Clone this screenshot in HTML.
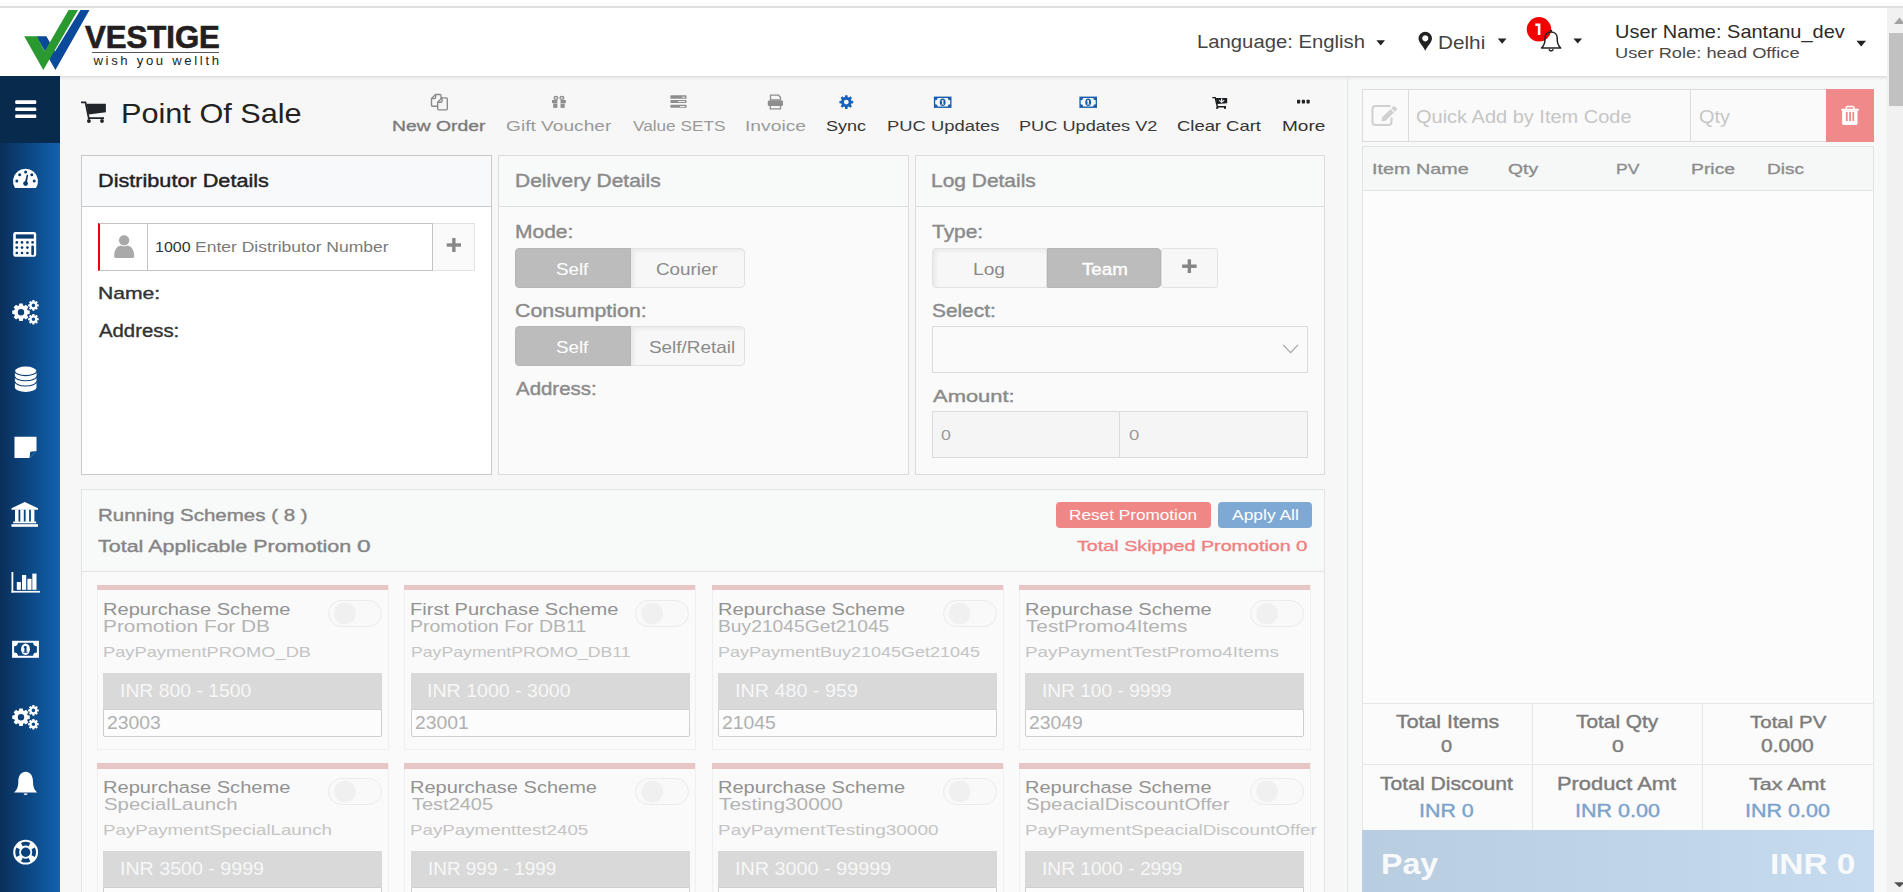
<!DOCTYPE html>
<html><head><meta charset="utf-8"><style>
html,body{margin:0;padding:0;width:1903px;height:892px;overflow:hidden;background:#fff}
body{position:relative;font-family:"Liberation Sans",sans-serif}
.t{position:absolute;white-space:nowrap;line-height:1;transform-origin:0 0}
.b{position:absolute;box-sizing:border-box}
svg{position:absolute;left:0;top:0}
</style></head><body>
<div class="b" style="left:0px;top:0px;width:1903px;height:892px;background:#fff"></div>
<div class="b" style="left:0px;top:6px;width:1903px;height:2px;background:#dfe1df"></div>
<div class="b" style="left:0px;top:8px;width:1887px;height:68px;background:#fff"></div>
<div class="b" style="left:60px;top:76px;width:1287px;height:816px;background:#f7f7f7"></div>
<div class="b" style="left:1347px;top:76px;width:540px;height:816px;background:#f7f9f9;border-left:1px solid #e3e4ea"></div>
<div class="b" style="left:60px;top:76px;width:1827px;height:4px;background:linear-gradient(#d9d9d9,#e8e8e8 35%,rgba(247,247,247,0))"></div>
<div class="b" style="left:0px;top:76px;width:60px;height:816px;background:linear-gradient(90deg,#0a2f5a 0%,#0c4580 45%,#1262b0 100%)"></div>
<div class="b" style="left:0px;top:76px;width:60px;height:67px;background:#072a4d"></div>
<div class="b" style="left:1887px;top:8px;width:16px;height:884px;background:#f1f1f1"></div>
<div class="b" style="left:1889px;top:33px;width:14px;height:73px;background:#c1c1c1"></div>
<div class="t" style="left:85.34px;top:23px;font-size:30.91px;font-weight:700;color:#231f20;transform:scaleX(1.0064);-webkit-text-stroke:0.7px #231f20">VESTIGE</div>
<div class="b" style="left:92px;top:52px;width:127px;height:1px;background:#5a5656"></div>
<div class="t" style="left:93.40px;top:54px;font-size:13.15px;font-weight:400;color:#231f20;letter-spacing:2.665px;">wish you wellth</div>
<div class="t" style="left:1196.98px;top:33px;font-size:18.18px;font-weight:400;color:#444;transform:scaleX(1.1162);">Language: English</div>
<div class="t" style="left:1438.44px;top:35px;font-size:17.90px;font-weight:400;color:#444;transform:scaleX(1.1591);">Delhi</div>
<div class="t" style="left:1615.10px;top:24px;font-size:17.76px;font-weight:400;color:#2b2b2b;transform:scaleX(1.1250);">User Name: Santanu_dev</div>
<div class="t" style="left:1615.23px;top:46px;font-size:14.55px;font-weight:400;color:#4a4a4a;transform:scaleX(1.2565);">User Role: head Office</div>
<div class="t" style="left:120.75px;top:101px;font-size:26.99px;font-weight:400;color:#222;transform:scaleX(1.1361);">Point Of Sale</div>
<div class="t" style="left:392.25px;top:119px;font-size:14.97px;font-weight:400;-webkit-text-stroke:0.329px #7a7a7a;color:#7a7a7a;transform:scaleX(1.2913);">New Order</div>
<div class="t" style="left:505.74px;top:119px;font-size:14.97px;font-weight:400;color:#9a9a9a;transform:scaleX(1.2787);">Gift Voucher</div>
<div class="t" style="left:632.81px;top:118px;font-size:15.10px;font-weight:400;color:#9a9a9a;transform:scaleX(1.1387);">Value SETS</div>
<div class="t" style="left:745.07px;top:118px;font-size:15.10px;font-weight:400;color:#9a9a9a;transform:scaleX(1.2760);">Invoice</div>
<div class="t" style="left:826.09px;top:118px;font-size:15.10px;font-weight:400;color:#333;transform:scaleX(1.1920);">Sync</div>
<div class="t" style="left:886.63px;top:118px;font-size:15.24px;font-weight:400;color:#3a3a3a;transform:scaleX(1.2070);">PUC Updates</div>
<div class="t" style="left:1019.05px;top:118px;font-size:15.24px;font-weight:400;color:#3a3a3a;transform:scaleX(1.1927);">PUC Updates V2</div>
<div class="t" style="left:1177.48px;top:118px;font-size:15.52px;font-weight:400;color:#333;transform:scaleX(1.1867);">Clear Cart</div>
<div class="t" style="left:1282.18px;top:118px;font-size:15.52px;font-weight:400;color:#333;transform:scaleX(1.2254);">More</div>
<div class="b" style="left:81px;top:155px;width:411px;height:320px;background:#fff;border:1px solid #c9c9c9"></div>
<div class="b" style="left:81px;top:155px;width:411px;height:52px;background:#f8f9fb;border:1px solid #c9c9c9"></div>
<div class="b" style="left:498px;top:155px;width:411px;height:320px;background:#fafafa;border:1px solid #dcdcdc"></div>
<div class="b" style="left:498px;top:155px;width:411px;height:52px;background:#f8f9f9;border:1px solid #dcdcdc"></div>
<div class="b" style="left:915px;top:155px;width:410px;height:320px;background:#fafafa;border:1px solid #dcdcdc"></div>
<div class="b" style="left:915px;top:155px;width:410px;height:52px;background:#f8f9f9;border:1px solid #dcdcdc"></div>
<div class="t" style="left:97.77px;top:172px;font-size:18.04px;font-weight:400;-webkit-text-stroke:0.397px #222;color:#222;transform:scaleX(1.2012);">Distributor Details</div>
<div class="t" style="left:514.92px;top:173px;font-size:17.62px;font-weight:400;-webkit-text-stroke:0.388px #8a8a8a;color:#8a8a8a;transform:scaleX(1.1906);">Delivery Details</div>
<div class="t" style="left:931.32px;top:173px;font-size:17.62px;font-weight:400;-webkit-text-stroke:0.388px #8a8a8a;color:#8a8a8a;transform:scaleX(1.1895);">Log Details</div>
<div class="b" style="left:98px;top:223px;width:50px;height:48px;background:#fff;border:1px solid #c4c4c4;border-left:2px solid #e6000f"></div>
<div class="b" style="left:147px;top:223px;width:286px;height:48px;background:#fff;border:1px solid #c4c4c4"></div>
<div class="b" style="left:433px;top:223px;width:42px;height:48px;background:#fafafa;border:1px solid #e2e2e2;border-left:none"></div>
<div class="t" style="left:155.30px;top:239px;font-size:15.24px;font-weight:400;color:#333;transform:scaleX(1.0514);">1000</div>
<div class="t" style="left:194.50px;top:239px;font-size:15.24px;font-weight:400;color:#7a7a7a;transform:scaleX(1.1491);">Enter Distributor Number</div>
<div class="t" style="left:97.71px;top:285px;font-size:17.20px;font-weight:400;-webkit-text-stroke:0.378px #333;color:#333;transform:scaleX(1.2296);">Name:</div>
<div class="t" style="left:98.90px;top:323px;font-size:17.48px;font-weight:400;-webkit-text-stroke:0.385px #333;color:#333;transform:scaleX(1.1633);">Address:</div>
<div class="t" style="left:514.92px;top:224px;font-size:17.48px;font-weight:400;-webkit-text-stroke:0.385px #8a8a8a;color:#8a8a8a;transform:scaleX(1.2011);">Mode:</div>
<div class="b" style="left:630px;top:248px;width:115px;height:40px;background:#f7f7f7;border:1px solid #e2e2e2;border-radius:0 4px 4px 0;box-shadow:inset 3px 2px 4px rgba(0,0,0,0.06)"></div>
<div class="b" style="left:515px;top:248px;width:116px;height:40px;background:#bcbcbc;border:1px solid #b5b5b5;border-radius:4px 0 0 4px"></div>
<div class="t" style="left:556.06px;top:261px;font-size:16.50px;font-weight:400;color:#fff;transform:scaleX(1.1361);">Self</div>
<div class="t" style="left:655.76px;top:261px;font-size:16.50px;font-weight:400;color:#8a8a8a;transform:scaleX(1.1420);">Courier</div>
<div class="t" style="left:515.13px;top:303px;font-size:17.90px;font-weight:400;-webkit-text-stroke:0.394px #8a8a8a;color:#8a8a8a;transform:scaleX(1.1932);">Consumption:</div>
<div class="b" style="left:630px;top:326px;width:115px;height:40px;background:#f7f7f7;border:1px solid #e2e2e2;border-radius:0 4px 4px 0;box-shadow:inset 3px 2px 4px rgba(0,0,0,0.06)"></div>
<div class="b" style="left:515px;top:326px;width:116px;height:40px;background:#bcbcbc;border:1px solid #b5b5b5;border-radius:4px 0 0 4px"></div>
<div class="t" style="left:556.06px;top:339px;font-size:16.50px;font-weight:400;color:#fff;transform:scaleX(1.1361);">Self</div>
<div class="t" style="left:649.35px;top:339px;font-size:16.50px;font-weight:400;color:#8a8a8a;transform:scaleX(1.1451);">Self/Retail</div>
<div class="t" style="left:515.50px;top:380px;font-size:18.18px;font-weight:400;-webkit-text-stroke:0.400px #8a8a8a;color:#8a8a8a;transform:scaleX(1.1243);">Address:</div>
<div class="t" style="left:931.78px;top:224px;font-size:17.62px;font-weight:400;-webkit-text-stroke:0.388px #8a8a8a;color:#8a8a8a;transform:scaleX(1.1884);">Type:</div>
<div class="b" style="left:932px;top:248px;width:115px;height:40px;background:#f7f7f7;border:1px solid #e2e2e2;border-radius:4px 0 0 4px;box-shadow:inset 3px 2px 4px rgba(0,0,0,0.06)"></div>
<div class="b" style="left:1047px;top:248px;width:114px;height:40px;background:#bcbcbc;border:1px solid #b5b5b5;border-radius:0 4px 4px 0"></div>
<div class="t" style="left:973.26px;top:262px;font-size:16.64px;font-weight:400;color:#8a8a8a;transform:scaleX(1.1542);">Log</div>
<div class="t" style="left:1081.63px;top:262px;font-size:16.64px;font-weight:400;-webkit-text-stroke:0.366px #fff;color:#fff;transform:scaleX(1.1253);">Team</div>
<div class="b" style="left:1161px;top:248px;width:57px;height:40px;background:#f7f7f7;border:1px solid #e2e2e2;border-radius:3px"></div>
<div class="t" style="left:931.66px;top:303px;font-size:17.48px;font-weight:400;-webkit-text-stroke:0.385px #8a8a8a;color:#8a8a8a;transform:scaleX(1.1930);">Select:</div>
<div class="b" style="left:932px;top:326px;width:376px;height:47px;background:#fafafa;border:1px solid #dcdcdc"></div>
<div class="t" style="left:932.60px;top:388px;font-size:17.06px;font-weight:400;-webkit-text-stroke:0.375px #8a8a8a;color:#8a8a8a;transform:scaleX(1.2868);">Amount:</div>
<div class="b" style="left:932px;top:411px;width:188px;height:47px;background:#f5f5f5;border:1px solid #dcdcdc"></div>
<div class="b" style="left:1119px;top:411px;width:189px;height:47px;background:#f5f5f5;border:1px solid #dcdcdc"></div>
<div class="t" style="left:940.89px;top:428px;font-size:14.27px;font-weight:400;color:#9a9a9a;transform:scaleX(1.2413);">0</div>
<div class="t" style="left:1129.06px;top:428px;font-size:14.27px;font-weight:400;color:#9a9a9a;transform:scaleX(1.2997);">0</div>
<div class="b" style="left:81px;top:489px;width:1244px;height:420px;background:#fafafa;border:1px solid #e3e3e3"></div>
<div class="b" style="left:81px;top:489px;width:1244px;height:83px;background:#f8f9f9;border:1px solid #e3e3e3"></div>
<div class="t" style="left:97.76px;top:508px;font-size:16.92px;font-weight:400;-webkit-text-stroke:0.372px #858585;color:#858585;transform:scaleX(1.2123);">Running Schemes ( 8 )</div>
<div class="t" style="left:98.47px;top:538px;font-size:17.20px;font-weight:400;-webkit-text-stroke:0.378px #858585;color:#858585;transform:scaleX(1.2495);">Total Applicable Promotion</div>
<div class="t" style="left:357.32px;top:538px;font-size:17.20px;font-weight:400;-webkit-text-stroke:0.378px #858585;color:#858585;transform:scaleX(1.4290);">0</div>
<div class="b" style="left:1056px;top:502px;width:155px;height:26px;background:#f08787;border-radius:4px"></div>
<div class="t" style="left:1069.22px;top:508px;font-size:14.83px;font-weight:400;color:#fff;transform:scaleX(1.1596);">Reset Promotion</div>
<div class="b" style="left:1218px;top:502px;width:94px;height:26px;background:#7ea9d5;border-radius:4px"></div>
<div class="t" style="left:1232.30px;top:508px;font-size:14.83px;font-weight:400;color:#fff;transform:scaleX(1.1755);">Apply All</div>
<div class="t" style="left:1076.81px;top:538px;font-size:15.24px;font-weight:400;-webkit-text-stroke:0.335px #f08080;color:#f08080;transform:scaleX(1.2948);">Total Skipped Promotion</div>
<div class="t" style="left:1296.38px;top:538px;font-size:15.24px;font-weight:400;-webkit-text-stroke:0.335px #f08080;color:#f08080;transform:scaleX(1.3529);">0</div>
<div class="b" style="left:97px;top:585px;width:292px;height:165px;background:#fafafa;border:1px solid #efefef"></div>
<div class="b" style="left:97px;top:585px;width:291px;height:5px;background:#e8c6c6"></div>
<div class="t" style="left:102.99px;top:601px;font-size:17.20px;font-weight:400;color:#929292;transform:scaleX(1.1670);">Repurchase Scheme</div>
<div class="t" style="left:102.93px;top:618px;font-size:17.34px;font-weight:400;color:#b4b4b4;transform:scaleX(1.2045);">Promotion For DB</div>
<div class="t" style="left:103.14px;top:644px;font-size:15.38px;font-weight:400;color:#c4c4c4;transform:scaleX(1.1874);">PayPaymentPROMO_DB</div>
<div class="b" style="left:103px;top:673px;width:279px;height:37px;background:#d9d9d9"></div>
<div class="t" style="left:120.16px;top:682px;font-size:18.74px;font-weight:400;color:#f7f7f7;transform:scaleX(1.0335);">INR 800 - 1500</div>
<div class="b" style="left:103px;top:709px;width:279px;height:28px;background:#fcfcfc;border:1px solid #cfcfcf;border-radius:0 0 2px 2px"></div>
<div class="t" style="left:107.43px;top:714px;font-size:18.04px;font-weight:400;color:#b0b0b0;transform:scaleX(1.0714);">23003</div>
<div class="b" style="left:328px;top:600px;width:54px;height:27px;background:#f9f9f9;border:1px solid #ebebeb;border-radius:14px"></div>
<div class="b" style="left:404px;top:585px;width:292px;height:165px;background:#fafafa;border:1px solid #efefef"></div>
<div class="b" style="left:404px;top:585px;width:291px;height:5px;background:#e8c6c6"></div>
<div class="t" style="left:410.32px;top:601px;font-size:17.20px;font-weight:400;color:#929292;transform:scaleX(1.1670);">First Purchase Scheme</div>
<div class="t" style="left:410.37px;top:618px;font-size:17.34px;font-weight:400;color:#b4b4b4;transform:scaleX(1.1259);">Promotion For DB11</div>
<div class="t" style="left:410.52px;top:644px;font-size:15.38px;font-weight:400;color:#c4c4c4;transform:scaleX(1.1493);">PayPaymentPROMO_DB11</div>
<div class="b" style="left:411px;top:673px;width:279px;height:37px;background:#d9d9d9"></div>
<div class="t" style="left:427.47px;top:682px;font-size:18.74px;font-weight:400;color:#f7f7f7;transform:scaleX(1.0447);">INR 1000 - 3000</div>
<div class="b" style="left:411px;top:709px;width:279px;height:28px;background:#fcfcfc;border:1px solid #cfcfcf;border-radius:0 0 2px 2px"></div>
<div class="t" style="left:414.76px;top:714px;font-size:18.04px;font-weight:400;color:#b0b0b0;transform:scaleX(1.0734);">23001</div>
<div class="b" style="left:635px;top:600px;width:54px;height:27px;background:#f9f9f9;border:1px solid #ebebeb;border-radius:14px"></div>
<div class="b" style="left:712px;top:585px;width:292px;height:165px;background:#fafafa;border:1px solid #efefef"></div>
<div class="b" style="left:712px;top:585px;width:291px;height:5px;background:#e8c6c6"></div>
<div class="t" style="left:717.67px;top:601px;font-size:17.20px;font-weight:400;color:#929292;transform:scaleX(1.1653);">Repurchase Scheme</div>
<div class="t" style="left:717.73px;top:618px;font-size:17.34px;font-weight:400;color:#b4b4b4;transform:scaleX(1.1114);">Buy21045Get21045</div>
<div class="t" style="left:717.83px;top:644px;font-size:15.38px;font-weight:400;color:#c4c4c4;transform:scaleX(1.1701);">PayPaymentBuy21045Get21045</div>
<div class="b" style="left:718px;top:673px;width:279px;height:37px;background:#d9d9d9"></div>
<div class="t" style="left:734.79px;top:682px;font-size:18.74px;font-weight:400;color:#f7f7f7;transform:scaleX(1.0552);">INR 480 - 959</div>
<div class="b" style="left:718px;top:709px;width:279px;height:28px;background:#fcfcfc;border:1px solid #cfcfcf;border-radius:0 0 2px 2px"></div>
<div class="t" style="left:722.10px;top:714px;font-size:18.04px;font-weight:400;color:#b0b0b0;transform:scaleX(1.0714);">21045</div>
<div class="b" style="left:943px;top:600px;width:54px;height:27px;background:#f9f9f9;border:1px solid #ebebeb;border-radius:14px"></div>
<div class="b" style="left:1019px;top:585px;width:292px;height:165px;background:#fafafa;border:1px solid #efefef"></div>
<div class="b" style="left:1019px;top:585px;width:291px;height:5px;background:#e8c6c6"></div>
<div class="t" style="left:1025.00px;top:601px;font-size:17.20px;font-weight:400;color:#929292;transform:scaleX(1.1632);">Repurchase Scheme</div>
<div class="t" style="left:1026.18px;top:618px;font-size:17.34px;font-weight:400;color:#b4b4b4;transform:scaleX(1.1973);">TestPromo4Items</div>
<div class="t" style="left:1025.09px;top:644px;font-size:15.38px;font-weight:400;color:#c4c4c4;transform:scaleX(1.2279);">PayPaymentTestPromo4Items</div>
<div class="b" style="left:1025px;top:673px;width:279px;height:37px;background:#d9d9d9"></div>
<div class="t" style="left:1042.18px;top:682px;font-size:18.74px;font-weight:400;color:#f7f7f7;transform:scaleX(1.0206);">INR 100 - 9999</div>
<div class="b" style="left:1025px;top:709px;width:279px;height:28px;background:#fcfcfc;border:1px solid #cfcfcf;border-radius:0 0 2px 2px"></div>
<div class="t" style="left:1029.43px;top:714px;font-size:18.04px;font-weight:400;color:#b0b0b0;transform:scaleX(1.0734);">23049</div>
<div class="b" style="left:1250px;top:600px;width:54px;height:27px;background:#f9f9f9;border:1px solid #ebebeb;border-radius:14px"></div>
<div class="b" style="left:97px;top:763px;width:292px;height:165px;background:#fafafa;border:1px solid #efefef"></div>
<div class="b" style="left:97px;top:763px;width:291px;height:6px;background:#e8c6c6"></div>
<div class="t" style="left:102.99px;top:779px;font-size:17.20px;font-weight:400;color:#929292;transform:scaleX(1.1670);">Repurchase Scheme</div>
<div class="t" style="left:103.68px;top:796px;font-size:17.34px;font-weight:400;color:#b4b4b4;transform:scaleX(1.1747);">SpecialLaunch</div>
<div class="t" style="left:103.10px;top:822px;font-size:15.38px;font-weight:400;color:#c4c4c4;transform:scaleX(1.2177);">PayPaymentSpecialLaunch</div>
<div class="b" style="left:103px;top:851px;width:279px;height:37px;background:#d9d9d9"></div>
<div class="t" style="left:120.13px;top:860px;font-size:18.74px;font-weight:400;color:#f7f7f7;transform:scaleX(1.0472);">INR 3500 - 9999</div>
<div class="b" style="left:103px;top:887px;width:279px;height:28px;background:#fcfcfc;border:1px solid #cfcfcf;border-radius:0 0 2px 2px"></div>
<div class="b" style="left:328px;top:778px;width:54px;height:27px;background:#f9f9f9;border:1px solid #ebebeb;border-radius:14px"></div>
<div class="b" style="left:404px;top:763px;width:292px;height:165px;background:#fafafa;border:1px solid #efefef"></div>
<div class="b" style="left:404px;top:763px;width:291px;height:6px;background:#e8c6c6"></div>
<div class="t" style="left:410.33px;top:779px;font-size:17.20px;font-weight:400;color:#929292;transform:scaleX(1.1649);">Repurchase Scheme</div>
<div class="t" style="left:411.53px;top:796px;font-size:17.34px;font-weight:400;color:#b4b4b4;transform:scaleX(1.1528);">Test2405</div>
<div class="t" style="left:410.43px;top:822px;font-size:15.38px;font-weight:400;color:#c4c4c4;transform:scaleX(1.2195);">PayPaymenttest2405</div>
<div class="b" style="left:411px;top:851px;width:279px;height:37px;background:#d9d9d9"></div>
<div class="t" style="left:427.53px;top:860px;font-size:18.74px;font-weight:400;color:#f7f7f7;transform:scaleX(1.0099);">INR 999 - 1999</div>
<div class="b" style="left:411px;top:887px;width:279px;height:28px;background:#fcfcfc;border:1px solid #cfcfcf;border-radius:0 0 2px 2px"></div>
<div class="b" style="left:635px;top:778px;width:54px;height:27px;background:#f9f9f9;border:1px solid #ebebeb;border-radius:14px"></div>
<div class="b" style="left:712px;top:763px;width:292px;height:165px;background:#fafafa;border:1px solid #efefef"></div>
<div class="b" style="left:712px;top:763px;width:291px;height:6px;background:#e8c6c6"></div>
<div class="t" style="left:717.67px;top:779px;font-size:17.20px;font-weight:400;color:#929292;transform:scaleX(1.1653);">Repurchase Scheme</div>
<div class="t" style="left:718.85px;top:796px;font-size:17.34px;font-weight:400;color:#b4b4b4;transform:scaleX(1.2024);">Testing30000</div>
<div class="t" style="left:717.75px;top:822px;font-size:15.38px;font-weight:400;color:#c4c4c4;transform:scaleX(1.2346);">PayPaymentTesting30000</div>
<div class="b" style="left:718px;top:851px;width:279px;height:37px;background:#d9d9d9"></div>
<div class="t" style="left:734.79px;top:860px;font-size:18.74px;font-weight:400;color:#f7f7f7;transform:scaleX(1.0564);">INR 3000 - 99999</div>
<div class="b" style="left:718px;top:887px;width:279px;height:28px;background:#fcfcfc;border:1px solid #cfcfcf;border-radius:0 0 2px 2px"></div>
<div class="b" style="left:943px;top:778px;width:54px;height:27px;background:#f9f9f9;border:1px solid #ebebeb;border-radius:14px"></div>
<div class="b" style="left:1019px;top:763px;width:292px;height:165px;background:#fafafa;border:1px solid #efefef"></div>
<div class="b" style="left:1019px;top:763px;width:291px;height:6px;background:#e8c6c6"></div>
<div class="t" style="left:1025.00px;top:779px;font-size:17.20px;font-weight:400;color:#929292;transform:scaleX(1.1620);">Repurchase Scheme</div>
<div class="t" style="left:1025.68px;top:796px;font-size:17.34px;font-weight:400;color:#b4b4b4;transform:scaleX(1.1830);">SpeacialDiscountOffer</div>
<div class="t" style="left:1025.10px;top:822px;font-size:15.38px;font-weight:400;color:#c4c4c4;transform:scaleX(1.2162);">PayPaymentSpeacialDiscountOffer</div>
<div class="b" style="left:1025px;top:851px;width:279px;height:37px;background:#d9d9d9"></div>
<div class="t" style="left:1042.18px;top:860px;font-size:18.74px;font-weight:400;color:#f7f7f7;transform:scaleX(1.0220);">INR 1000 - 2999</div>
<div class="b" style="left:1025px;top:887px;width:279px;height:28px;background:#fcfcfc;border:1px solid #cfcfcf;border-radius:0 0 2px 2px"></div>
<div class="b" style="left:1250px;top:778px;width:54px;height:27px;background:#f9f9f9;border:1px solid #ebebeb;border-radius:14px"></div>
<div class="b" style="left:1362px;top:89px;width:47px;height:53px;background:#fafafa;border:1px solid #dcdcdc"></div>
<div class="b" style="left:1408px;top:89px;width:283px;height:53px;background:#fafafa;border:1px solid #dcdcdc"></div>
<div class="b" style="left:1690px;top:89px;width:137px;height:53px;background:#fafafa;border:1px solid #dcdcdc"></div>
<div class="b" style="left:1826px;top:89px;width:48px;height:53px;background:#f08a8a"></div>
<div class="t" style="left:1416.40px;top:108px;font-size:18.18px;font-weight:400;color:#c6c6c6;transform:scaleX(1.1000);">Quick Add by Item Code</div>
<div class="t" style="left:1699.00px;top:108px;font-size:18.18px;font-weight:400;color:#c6c6c6;transform:scaleX(1.0964);">Qty</div>
<div class="b" style="left:1362px;top:146px;width:512px;height:558px;background:#fcfcfc;border:1px solid #e3e3e3"></div>
<div class="b" style="left:1362px;top:146px;width:512px;height:45px;background:#f6f8f8;border:1px solid #e3e3e3"></div>
<div class="t" style="left:1372.42px;top:161px;font-size:15.38px;font-weight:400;-webkit-text-stroke:0.338px #8c8c8c;color:#8c8c8c;transform:scaleX(1.2850);">Item Name</div>
<div class="t" style="left:1508.03px;top:161px;font-size:15.38px;font-weight:400;-webkit-text-stroke:0.338px #8c8c8c;color:#8c8c8c;transform:scaleX(1.2570);">Qty</div>
<div class="t" style="left:1616.10px;top:161px;font-size:15.38px;font-weight:400;-webkit-text-stroke:0.338px #8c8c8c;color:#8c8c8c;transform:scaleX(1.1382);">PV</div>
<div class="t" style="left:1691.35px;top:161px;font-size:15.38px;font-weight:400;-webkit-text-stroke:0.338px #8c8c8c;color:#8c8c8c;transform:scaleX(1.2577);">Price</div>
<div class="t" style="left:1767.08px;top:161px;font-size:15.38px;font-weight:400;-webkit-text-stroke:0.338px #8c8c8c;color:#8c8c8c;transform:scaleX(1.2364);">Disc</div>
<div class="b" style="left:1362px;top:703px;width:171px;height:62px;background:#fbfbfb;border:1px solid #e6e6e6"></div>
<div class="b" style="left:1362px;top:764px;width:171px;height:67px;background:#fbfbfb;border:1px solid #e6e6e6"></div>
<div class="b" style="left:1532px;top:703px;width:171px;height:62px;background:#fbfbfb;border:1px solid #e6e6e6"></div>
<div class="b" style="left:1532px;top:764px;width:171px;height:67px;background:#fbfbfb;border:1px solid #e6e6e6"></div>
<div class="b" style="left:1702px;top:703px;width:172px;height:62px;background:#fbfbfb;border:1px solid #e6e6e6"></div>
<div class="b" style="left:1702px;top:764px;width:172px;height:67px;background:#fbfbfb;border:1px solid #e6e6e6"></div>
<div class="t" style="left:1395.67px;top:714px;font-size:17.62px;font-weight:400;-webkit-text-stroke:0.388px #7c7c7c;color:#7c7c7c;transform:scaleX(1.2109);">Total Items</div>
<div class="t" style="left:1441.40px;top:739px;font-size:16.92px;font-weight:400;-webkit-text-stroke:0.372px #7c7c7c;color:#7c7c7c;transform:scaleX(1.1818);">0</div>
<div class="t" style="left:1576.08px;top:714px;font-size:17.62px;font-weight:400;-webkit-text-stroke:0.388px #7c7c7c;color:#7c7c7c;transform:scaleX(1.1841);">Total Qty</div>
<div class="t" style="left:1611.55px;top:739px;font-size:16.92px;font-weight:400;-webkit-text-stroke:0.372px #7c7c7c;color:#7c7c7c;transform:scaleX(1.2557);">0</div>
<div class="t" style="left:1749.59px;top:714px;font-size:17.34px;font-weight:400;-webkit-text-stroke:0.382px #7c7c7c;color:#7c7c7c;transform:scaleX(1.1829);">Total PV</div>
<div class="t" style="left:1761.36px;top:738px;font-size:17.48px;font-weight:400;-webkit-text-stroke:0.385px #7c7c7c;color:#7c7c7c;transform:scaleX(1.2053);">0.000</div>
<div class="t" style="left:1380.48px;top:776px;font-size:17.62px;font-weight:400;-webkit-text-stroke:0.388px #7c7c7c;color:#7c7c7c;transform:scaleX(1.2011);">Total Discount</div>
<div class="t" style="left:1557.45px;top:776px;font-size:17.62px;font-weight:400;-webkit-text-stroke:0.388px #7c7c7c;color:#7c7c7c;transform:scaleX(1.2408);">Product Amt</div>
<div class="t" style="left:1749.37px;top:776px;font-size:17.34px;font-weight:400;-webkit-text-stroke:0.382px #7c7c7c;color:#7c7c7c;transform:scaleX(1.2414);">Tax Amt</div>
<div class="t" style="left:1419.37px;top:803px;font-size:17.62px;font-weight:400;-webkit-text-stroke:0.388px #7ba3cb;color:#7ba3cb;transform:scaleX(1.2167);">INR 0</div>
<div class="t" style="left:1574.56px;top:803px;font-size:17.62px;font-weight:400;-webkit-text-stroke:0.388px #7ba3cb;color:#7ba3cb;transform:scaleX(1.2241);">INR 0.00</div>
<div class="t" style="left:1745.16px;top:803px;font-size:17.90px;font-weight:400;-webkit-text-stroke:0.394px #7ba3cb;color:#7ba3cb;transform:scaleX(1.2035);">INR 0.00</div>
<div class="b" style="left:1362px;top:830px;width:512px;height:62px;background:linear-gradient(90deg,#b9cde0,#c1d5e8 60%,#c6dbef)"></div>
<div class="t" style="left:1380.51px;top:849px;font-size:29.37px;font-weight:700;color:#f8f9fb;transform:scaleX(1.0931);">Pay</div>
<div class="t" style="left:1769.63px;top:849px;font-size:29.79px;font-weight:700;color:#f8f9fb;transform:scaleX(1.1208);">INR 0</div>
<svg width="1903" height="892" viewBox="0 0 1903 892">
<path d="M1894 24 L1899.5 17.6 L1905 24 Z" fill="#a3a3a3"/>
<path d="M1894 882.2 L1905 882.2 L1899.5 887.3 Z" fill="#505050"/>
<polygon points="36.3,36.3 46.4,36.3 55,51.5 80.5,10.1 89.5,10.1 55.4,70" fill="#0b4a9b"/>
<polygon points="24.2,36.3 37,36.3 44.5,51.5 68.6,10.1 78,10.1 43.3,70" fill="#2a9a30"/>
<path d="M1376.4 40.3 L1385 40.3 L1380.7 45.5 Z" fill="#222"/>
<path fill="#222" fill-rule="evenodd" d="M1425.25 50.7 C1423 46 1418.5 42 1418.5 38.5 A6.75 6.75 0 0 1 1432 38.5 C1432 42 1427.5 46 1425.25 50.7 Z M1425.3 35.2 A3.1 3.1 0 1 0 1425.31 35.2 Z"/>
<path d="M1497.8 38.6 L1506.5 38.6 L1502.15 43.8 Z" fill="#222"/>
<circle cx="1539" cy="29.3" r="12.2" fill="#f50000"/>
<path fill="#fff" d="M1535.3 23.6 L1540.4 23.6 L1540.4 35 L1537.8 35 L1537.8 26 L1535.3 26 Z"/>
<path fill="none" stroke="#222" stroke-width="1.5" stroke-linejoin="round" d="M1541.5 48 C1543.6 46 1545 43.5 1545 39 L1545 37.8 C1545 34.2 1547.8 31.9 1551.1 31.9 C1554.4 31.9 1557.2 34.2 1557.2 37.8 L1557.2 39 C1557.2 43.5 1558.6 46 1560.7 48 Z"/>
<circle cx="1551.1" cy="30.9" r="1.1" fill="#222"/>
<path fill="none" stroke="#222" stroke-width="1.4" d="M1548.9 49.3 A2.3 2.3 0 0 0 1553.3 49.3"/>
<path d="M1573.5 38.4 L1582 38.4 L1577.75 43.6 Z" fill="#222"/>
<path d="M1856.4 40.7 L1866 40.7 L1861.2 46.4 Z" fill="#222"/>
<rect x="15.2" y="100.3" width="21.1" height="3.6" rx="1.2" fill="#fff"/>
<rect x="15.2" y="107.5" width="21.1" height="3.6" rx="1.2" fill="#fff"/>
<rect x="15.2" y="114.5" width="21.1" height="3.6" rx="1.2" fill="#fff"/>
<path fill="#fff" d="M15 188 A12.5 12.5 0 1 1 36 188 Z"/>
<g fill="#0b3c70"><circle cx="19.7" cy="174.7" r="1.5"/><circle cx="25.6" cy="172.1" r="1.5"/><circle cx="31.8" cy="174.7" r="1.5"/><circle cx="16.8" cy="181" r="1.5"/><circle cx="34.2" cy="181" r="1.5"/><circle cx="25.6" cy="183.6" r="2.4"/><path d="M24.6 183.2 L26.8 174.6 L28.2 174.9 L26.7 183.7 Z"/></g>
<rect x="13.2" y="232" width="23" height="24.7" rx="2.2" fill="#fff"/>
<g fill="#0b3c70"><rect x="15.8" y="234.4" width="18" height="4.2"/><circle cx="16.8" cy="242.4" r="1.35"/><circle cx="16.8" cy="247.6" r="1.35"/><circle cx="16.8" cy="253" r="1.35"/><circle cx="22" cy="242.4" r="1.35"/><circle cx="22" cy="247.6" r="1.35"/><circle cx="22" cy="253" r="1.35"/><circle cx="27.4" cy="242.4" r="1.35"/><circle cx="27.4" cy="247.6" r="1.35"/><circle cx="27.4" cy="253" r="1.35"/><circle cx="32.6" cy="242.4" r="1.35"/><rect x="31.3" y="245.6" width="2.6" height="9.6" rx="1.2"/></g>
<path fill="#fff" fill-rule="evenodd" d="M27.58 310.13 L29.73 310.48 L29.73 313.92 L27.58 314.27 L27.12 315.39 L28.39 317.16 L25.96 319.59 L24.19 318.32 L23.07 318.78 L22.72 320.93 L19.28 320.93 L18.93 318.78 L17.81 318.32 L16.04 319.59 L13.61 317.16 L14.88 315.39 L14.42 314.27 L12.27 313.92 L12.27 310.48 L14.42 310.13 L14.88 309.01 L13.61 307.24 L16.04 304.81 L17.81 306.08 L18.93 305.62 L19.28 303.47 L22.72 303.47 L23.07 305.62 L24.19 306.08 L25.96 304.81 L28.39 307.24 L27.12 309.01 Z M24.20 312.20 A3.2 3.2 0 1 0 17.80 312.20 A3.2 3.2 0 1 0 24.20 312.20 Z"/>
<path fill="#fff" fill-rule="evenodd" d="M37.23 304.24 L38.70 304.39 L38.70 306.41 L37.23 306.56 L36.93 307.29 L37.87 308.44 L36.44 309.87 L35.29 308.93 L34.56 309.23 L34.41 310.70 L32.39 310.70 L32.24 309.23 L31.51 308.93 L30.36 309.87 L28.93 308.44 L29.87 307.29 L29.57 306.56 L28.10 306.41 L28.10 304.39 L29.57 304.24 L29.87 303.51 L28.93 302.36 L30.36 300.93 L31.51 301.87 L32.24 301.57 L32.39 300.10 L34.41 300.10 L34.56 301.57 L35.29 301.87 L36.44 300.93 L37.87 302.36 L36.93 303.51 Z M35.20 305.40 A1.8 1.8 0 1 0 31.60 305.40 A1.8 1.8 0 1 0 35.20 305.40 Z"/>
<path fill="#fff" fill-rule="evenodd" d="M37.23 318.04 L38.70 318.19 L38.70 320.21 L37.23 320.36 L36.93 321.09 L37.87 322.24 L36.44 323.67 L35.29 322.73 L34.56 323.03 L34.41 324.50 L32.39 324.50 L32.24 323.03 L31.51 322.73 L30.36 323.67 L28.93 322.24 L29.87 321.09 L29.57 320.36 L28.10 320.21 L28.10 318.19 L29.57 318.04 L29.87 317.31 L28.93 316.16 L30.36 314.73 L31.51 315.67 L32.24 315.37 L32.39 313.90 L34.41 313.90 L34.56 315.37 L35.29 315.67 L36.44 314.73 L37.87 316.16 L36.93 317.31 Z M35.20 319.20 A1.8 1.8 0 1 0 31.60 319.20 A1.8 1.8 0 1 0 35.20 319.20 Z"/>
<path fill="#fff" fill-rule="evenodd" d="M27.58 715.13 L29.73 715.48 L29.73 718.92 L27.58 719.27 L27.12 720.39 L28.39 722.16 L25.96 724.59 L24.19 723.32 L23.07 723.78 L22.72 725.93 L19.28 725.93 L18.93 723.78 L17.81 723.32 L16.04 724.59 L13.61 722.16 L14.88 720.39 L14.42 719.27 L12.27 718.92 L12.27 715.48 L14.42 715.13 L14.88 714.01 L13.61 712.24 L16.04 709.81 L17.81 711.08 L18.93 710.62 L19.28 708.47 L22.72 708.47 L23.07 710.62 L24.19 711.08 L25.96 709.81 L28.39 712.24 L27.12 714.01 Z M24.20 717.20 A3.2 3.2 0 1 0 17.80 717.20 A3.2 3.2 0 1 0 24.20 717.20 Z"/>
<path fill="#fff" fill-rule="evenodd" d="M37.23 709.24 L38.70 709.39 L38.70 711.41 L37.23 711.56 L36.93 712.29 L37.87 713.44 L36.44 714.87 L35.29 713.93 L34.56 714.23 L34.41 715.70 L32.39 715.70 L32.24 714.23 L31.51 713.93 L30.36 714.87 L28.93 713.44 L29.87 712.29 L29.57 711.56 L28.10 711.41 L28.10 709.39 L29.57 709.24 L29.87 708.51 L28.93 707.36 L30.36 705.93 L31.51 706.87 L32.24 706.57 L32.39 705.10 L34.41 705.10 L34.56 706.57 L35.29 706.87 L36.44 705.93 L37.87 707.36 L36.93 708.51 Z M35.20 710.40 A1.8 1.8 0 1 0 31.60 710.40 A1.8 1.8 0 1 0 35.20 710.40 Z"/>
<path fill="#fff" fill-rule="evenodd" d="M37.23 723.04 L38.70 723.19 L38.70 725.21 L37.23 725.36 L36.93 726.09 L37.87 727.24 L36.44 728.67 L35.29 727.73 L34.56 728.03 L34.41 729.50 L32.39 729.50 L32.24 728.03 L31.51 727.73 L30.36 728.67 L28.93 727.24 L29.87 726.09 L29.57 725.36 L28.10 725.21 L28.10 723.19 L29.57 723.04 L29.87 722.31 L28.93 721.16 L30.36 719.73 L31.51 720.67 L32.24 720.37 L32.39 718.90 L34.41 718.90 L34.56 720.37 L35.29 720.67 L36.44 719.73 L37.87 721.16 L36.93 722.31 Z M35.20 724.20 A1.8 1.8 0 1 0 31.60 724.20 A1.8 1.8 0 1 0 35.20 724.20 Z"/>
<path fill="#fff" d="M14.9 371 A10.8 4.4 0 0 1 36.5 371 L36.5 387.5 A10.8 4.4 0 0 1 14.9 387.5 Z"/>
<g fill="none" stroke="#0b3e74" stroke-width="1.1"><path d="M14.9 371.2 A10.8 4.4 0 0 0 36.5 371.2"/><path d="M14.9 376.4 A10.8 4.4 0 0 0 36.5 376.4"/><path d="M14.9 381.6 A10.8 4.4 0 0 0 36.5 381.6"/></g>
<path fill="#fff" d="M14.5 436.7 L36.5 436.7 L36.5 451 L29.5 458 L14.5 458 Z"/>
<path fill="#0b4a8a" d="M36.5 451 L29.5 458 L30.2 451.8 Z"/>
<g fill="#fff"><path d="M11.5 508.2 L24.75 502 L38 508.2 L38 509.8 L11.5 509.8 Z"/><rect x="15" y="509.5" width="3.5" height="12.3"/><rect x="20.3" y="509.5" width="3.5" height="12.3"/><rect x="25.6" y="509.5" width="3.5" height="12.3"/><rect x="30.9" y="509.5" width="3.5" height="12.3"/><rect x="13.2" y="521.5" width="23" height="1.8"/><rect x="11.5" y="524.2" width="26.5" height="2.6"/></g>
<g fill="#fff"><rect x="11.5" y="572" width="1.8" height="20.6"/><rect x="11.5" y="590.9" width="28.5" height="1.7"/><rect x="16.8" y="582" width="4.1" height="7.8"/><rect x="22" y="575" width="4.2" height="14.8"/><rect x="27.4" y="578.8" width="4.1" height="11"/><rect x="32.3" y="573.6" width="4.2" height="16.2"/></g>
<rect x="12.1" y="640.8" width="26.80" height="17.00" fill="#fff"/>
<path fill="#0b437e" d="M17.86 642.81 L33.14 642.81 A3.75 3.40 0 0 0 36.89 646.21 L36.89 652.39 A3.75 3.40 0 0 0 33.14 655.79 L17.86 655.79 A3.75 3.40 0 0 0 14.11 652.39 L14.11 646.21 A3.75 3.40 0 0 0 17.86 642.81 Z"/>
<ellipse cx="25.50" cy="649.30" rx="4.45" ry="5.70" fill="#fff"/>
<path fill="#0b437e" d="M24.43 646.07 L26.57 646.07 L26.57 651.85 L27.64 651.85 L27.64 652.87 L23.36 652.87 L23.36 651.85 L24.43 651.85 L24.43 647.94 L23.76 648.28 L23.76 647.26 Z"/>
<path fill="#fff" d="M14.1 792.6 C16.8 790 18.3 787 18.3 781.5 C18.3 775.5 21.5 771.8 25.65 771.8 C29.8 771.8 33 775.5 33 781.5 C33 787 34.5 790 37.2 792.6 Z M23.6 793.4 A2.1 2.1 0 0 0 27.7 793.4 Z"/>
<circle cx="25.65" cy="852.2" r="12.4" fill="#fff"/>
<circle cx="25.65" cy="852.2" r="4.7" fill="#0b417a"/>
<path fill="#0b417a" d="M34.83 847.52 A10.3 10.3 0 0 1 34.83 856.88 L31.53 855.20 A6.6 6.6 0 0 0 31.53 849.20 Z M30.33 861.38 A10.3 10.3 0 0 1 20.97 861.38 L22.65 858.08 A6.6 6.6 0 0 0 28.65 858.08 Z M16.47 856.88 A10.3 10.3 0 0 1 16.47 847.52 L19.77 849.20 A6.6 6.6 0 0 0 19.77 855.20 Z M20.97 843.02 A10.3 10.3 0 0 1 30.33 843.02 L28.65 846.32 A6.6 6.6 0 0 0 22.65 846.32 Z"/>
<g fill="#212529"><path d="M81 101.4 L86.2 101.4 L89.5 117.2 L104 117.2 L104 119 L88 119 L84.8 103.2 L81 103.2 Z"/><path d="M86.5 103.8 L105.9 103.8 L105.9 112.3 L88.4 114.4 Z"/><circle cx="88.9" cy="121" r="1.9"/><circle cx="102" cy="121" r="1.9"/></g>
<g fill="none" stroke="#8a8a8a" stroke-width="1.35" stroke-linejoin="round" stroke-linecap="round"><path d="M441 98 L441 95.5 Q441 94.5 440 94.5 L435.6 94.5 L431.5 98.6 L431.5 105.2 Q431.5 106.2 432.5 106.2 L437.5 106.2"/><path d="M435.6 94.5 L435.6 97.6 Q435.6 98.6 434.6 98.6 L431.5 98.6"/><path d="M442 97.8 L446.3 97.8 Q447.3 97.8 447.3 98.8 L447.3 108.8 Q447.3 109.8 446.3 109.8 L438.7 109.8 Q437.7 109.8 437.7 108.8 L437.7 102.2 Z"/><path d="M442 97.8 L442 101.2 Q442 102.2 441 102.2 L437.7 102.2"/></g>
<g fill="#8e8e8e"><rect x="552" y="100" width="13.9" height="3.1"/><rect x="553.2" y="103.5" width="11.5" height="4.4"/></g>
<g fill="none" stroke="#8e8e8e" stroke-width="1.3"><ellipse cx="556" cy="97.9" rx="1.9" ry="1.4"/><ellipse cx="561.9" cy="97.9" rx="1.9" ry="1.4"/></g>
<rect x="557.4" y="100" width="3.1" height="8" fill="#f7f7f7"/>
<g fill="#8e8e8e"><rect x="670.4" y="95.3" width="16.1" height="3.5" rx="0.6"/><rect x="670.4" y="100.1" width="16.1" height="2.8" rx="0.6"/><rect x="670.4" y="104.8" width="16.1" height="3" rx="0.6"/></g>
<g fill="#f7f7f7"><rect x="682" y="96.7" width="3" height="0.9"/><rect x="678" y="101.1" width="7" height="0.9"/><rect x="680" y="106" width="5" height="0.9"/></g>
<g fill="#8e8e8e"><path d="M770.5 95.2 L778.5 95.2 L780.5 97.2 L780.5 100 L770.5 100 Z" fill="none" stroke="#8e8e8e" stroke-width="1.3"/><rect x="767.8" y="100.5" width="15.2" height="5.5" rx="1.2"/><path d="M770.3 104.5 L780.5 104.5 L780.5 108.8 L770.3 108.8 Z" fill="none" stroke="#8e8e8e" stroke-width="1.3"/></g>
<path fill="#1761b8" fill-rule="evenodd" d="M851.31 100.71 L853.20 100.90 L853.20 103.30 L851.31 103.49 L850.82 104.66 L852.03 106.13 L850.33 107.83 L848.86 106.62 L847.69 107.11 L847.50 109.00 L845.10 109.00 L844.91 107.11 L843.74 106.62 L842.27 107.83 L840.57 106.13 L841.78 104.66 L841.29 103.49 L839.40 103.30 L839.40 100.90 L841.29 100.71 L841.78 99.54 L840.57 98.07 L842.27 96.37 L843.74 97.58 L844.91 97.09 L845.10 95.20 L847.50 95.20 L847.69 97.09 L848.86 97.58 L850.33 96.37 L852.03 98.07 L850.82 99.54 Z M848.70 102.10 A2.4 2.4 0 1 0 843.90 102.10 A2.4 2.4 0 1 0 848.70 102.10 Z"/>
<rect x="933.9" y="96.6" width="17.60" height="11.30" fill="#1a5eab"/>
<path fill="#f7f7f7" d="M937.68 97.93 L947.72 97.93 A2.46 2.26 0 0 0 950.18 100.19 L950.18 104.31 A2.46 2.26 0 0 0 947.72 106.57 L937.68 106.57 A2.46 2.26 0 0 0 935.22 104.31 L935.22 100.19 A2.46 2.26 0 0 0 937.68 97.93 Z"/>
<ellipse cx="942.70" cy="102.25" rx="2.92" ry="3.79" fill="#1a5eab"/>
<path fill="#f7f7f7" d="M942.00 100.10 L943.40 100.10 L943.40 103.95 L944.11 103.95 L944.11 104.62 L941.29 104.62 L941.29 103.95 L942.00 103.95 L942.00 101.35 L941.56 101.57 L941.56 100.89 Z"/>
<rect x="1079.4" y="96.6" width="17.60" height="11.30" fill="#1a5eab"/>
<path fill="#f7f7f7" d="M1083.18 97.93 L1093.22 97.93 A2.46 2.26 0 0 0 1095.68 100.19 L1095.68 104.31 A2.46 2.26 0 0 0 1093.22 106.57 L1083.18 106.57 A2.46 2.26 0 0 0 1080.72 104.31 L1080.72 100.19 A2.46 2.26 0 0 0 1083.18 97.93 Z"/>
<ellipse cx="1088.20" cy="102.25" rx="2.92" ry="3.79" fill="#1a5eab"/>
<path fill="#f7f7f7" d="M1087.50 100.10 L1088.90 100.10 L1088.90 103.95 L1089.61 103.95 L1089.61 104.62 L1086.79 104.62 L1086.79 103.95 L1087.50 103.95 L1087.50 101.35 L1087.06 101.57 L1087.06 100.89 Z"/>
<g fill="#1b1e21"><path d="M1212.3 97 L1215.8 97 L1218 106 L1226 106 L1226 107.4 L1216.8 107.4 L1214.6 98.3 L1212.3 98.3 Z"/><path d="M1215.8 98 L1227.2 98 L1227.2 103.2 L1217.2 103.9 Z"/><rect x="1216.2" y="107" width="2" height="1.8"/><rect x="1224" y="107" width="2" height="1.8"/></g>
<path fill="#f7f7f7" d="M1219.5 99.8 L1221 101.3 L1221 98.5 L1222.3 98.5 L1222.3 101.3 L1223.8 99.8 L1224.6 100.6 L1221.65 103 L1218.7 100.6 Z"/>
<g fill="#222"><rect x="1297" y="99.8" width="3.2" height="3.6" rx="0.6"/><rect x="1301.8" y="99.8" width="3.2" height="3.6" rx="0.6"/><rect x="1306.5" y="99.8" width="3.2" height="3.6" rx="0.6"/></g>
<path fill="#a9a9a9" d="M114.2 255.5 C114.2 249.5 117.5 245.5 121.5 245.5 L126.8 245.5 C130.8 245.5 134.1 249.5 134.1 255.5 L134.1 256.3 C134.1 257.5 133.3 258.1 132.1 258.1 L116.2 258.1 C115 258.1 114.2 257.5 114.2 256.3 Z"/><circle cx="124.1" cy="240.3" r="5.6" fill="#a9a9a9" stroke="#fff" stroke-width="1"/>
<g fill="#888"><rect x="446.7" y="243.3" width="14.3" height="3.4"/><rect x="452.15" y="238" width="3.4" height="14"/></g>
<g fill="#858585"><rect x="1182.1" y="264.5" width="14.5" height="3.4"/><rect x="1187.65" y="259.3" width="3.4" height="13.7"/></g>
<path d="M1283.2 344.8 L1290.6 352.6 L1298 344.8" fill="none" stroke="#a0a0a0" stroke-width="1.1"/>
<circle cx="345.0" cy="613.5" r="10.8" fill="#f0f0f0"/>
<circle cx="652.3" cy="613.5" r="10.8" fill="#f0f0f0"/>
<circle cx="959.7" cy="613.5" r="10.8" fill="#f0f0f0"/>
<circle cx="1267.0" cy="613.5" r="10.8" fill="#f0f0f0"/>
<circle cx="345.0" cy="791.5" r="10.8" fill="#f0f0f0"/>
<circle cx="652.3" cy="791.5" r="10.8" fill="#f0f0f0"/>
<circle cx="959.7" cy="791.5" r="10.8" fill="#f0f0f0"/>
<circle cx="1267.0" cy="791.5" r="10.8" fill="#f0f0f0"/>
<g fill="none" stroke="#d0d0d0" stroke-width="2"><path d="M1390.5 106 L1375.5 106 C1373.5 106 1372.5 107 1372.5 109 L1372.5 122 C1372.5 124 1373.5 125 1375.5 125 L1388.5 125 C1390.5 125 1391.5 124 1391.5 122 L1391.5 117.5"/></g>
<path fill="#fafafa" d="M1381.60 121.30 L1382.20 117.35 L1390.63 109.09 L1393.99 112.51 L1385.56 120.77 Z" transform="translate(0,0)" stroke="#fafafa" stroke-width="2.2"/>
<path fill="#d0d0d0" d="M1381.60 121.30 L1382.20 117.35 L1390.63 109.09 L1393.99 112.51 L1385.56 120.77 Z"/>
<path fill="#d0d0d0" d="M1391.49 108.25 L1394.06 105.73 L1397.42 109.15 L1394.85 111.67 Z"/>
<g fill="#fff"><rect x="1841.2" y="108.8" width="17.8" height="2" rx="0.8"/><path fill="none" stroke="#fff" stroke-width="1.6" d="M1846.2 109 L1846.2 107.8 C1846.2 106.8 1846.8 106.5 1847.6 106.5 L1852.6 106.5 C1853.4 106.5 1854 106.8 1854 107.8 L1854 109"/><path d="M1842.1 110.6 L1857.5 110.6 L1857.5 123.5 C1857.5 124.4 1856.8 125 1856 125 L1843.6 125 C1842.8 125 1842.1 124.4 1842.1 123.5 Z"/></g>
<g fill="#f08a8a"><rect x="1845.9" y="111.9" width="1.8" height="9.2"/><rect x="1849.2" y="111.9" width="1.8" height="9.2"/><rect x="1852.4" y="111.9" width="1.8" height="9.2"/></g>
</svg>
</body></html>
